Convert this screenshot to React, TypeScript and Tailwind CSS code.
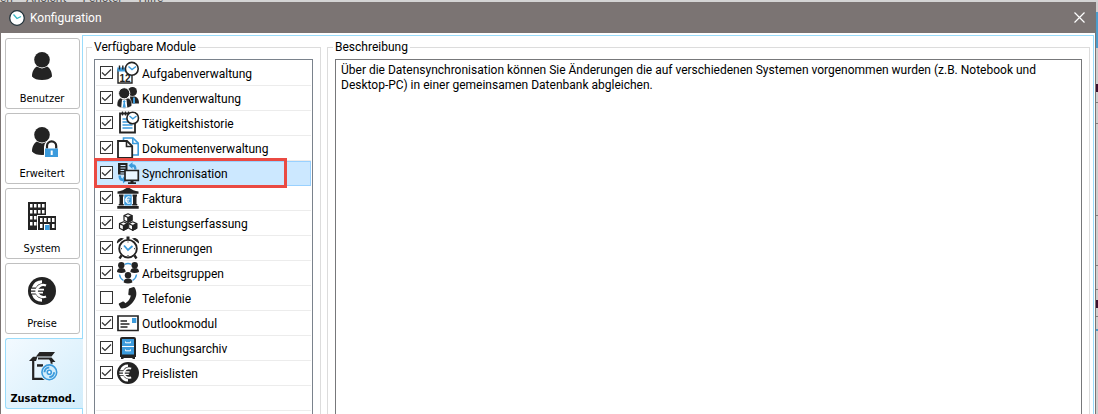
import { useState } from "react";
import type { ReactNode } from "react";

const DARK = "#232323";
const BLUE = "#3c9bdc";

function Icon({ size, children }: { size: 22 | 28; children: ReactNode }) {
  return (
    <svg width={size} height={size} viewBox={`0 0 ${size} ${size}`} fill={DARK} className="shrink-0 overflow-visible" aria-hidden="true">
      {children}
    </svg>
  );
}

// drawn on a 28 unit grid, reused for the sidebar and the price list module
function EuroCoin() {
  return (
    <>
      <circle cx="14" cy="14" r="14" />
      <path d="M14 3.200A10.800 10.800 0 0 0 3.800 10.500H8A7.800 7.800 0 0 1 14 6.200zM3.800 17.500A10.800 10.800 0 0 0 14 24.800v-3A7.800 7.800 0 0 1 8 17.500z" fill="#fff" />
      <path d="M18 8.500A6.800 6.800 0 0 0 8.500 14a6.800 6.800 0 0 0 9.500 5.500" fill="none" stroke="#fff" strokeWidth="2.400" />
      <path d="M3 12.600h13M3 15.600h12" stroke="#fff" strokeWidth="1.600" />
    </>
  );
}

function Person() {
  return (
    <>
      <circle cx="14" cy="7.700" r="7.800" />
      <path d="M4 24.500C4 19 6.500 16 9 14.600Q14 18.200 19 14.600C21.500 16 24 19 24 24.500Q21 28 14 28T4 24.500z" />
    </>
  );
}

const tabs = [
  { id: "user", label: "Benutzer", icon: <Person /> },
  {
    id: "advanced",
    label: "Erweitert",
    icon: (
      <>
        <Person />
        <path d="M16 30V20Q17 12.500 23.500 12.500T31 20V30z" fill="#fff" />
        <path d="M19 21.500v-2.500a4.600 4.600 0 0 1 9.200 0v2.500" fill="none" stroke={DARK} strokeWidth="2.200" />
        <path d="M17 21.500h13V30H17z" fill={BLUE} />
        <path d="M22.700 23.500h2v4.500h-2z" fill="#fff" />
      </>
    ),
  },
  {
    id: "system",
    label: "System",
    icon: (
      <>
        <path d="M0 0h18v28H0z" />
        <path
          d="M2 2h2.500v3.500H2zM6 2h2.500v3.500H6zM10 2h2.500v3.500H10zM14 2h2.500v3.500H14zM2 8h2.500v3.500H2zM6 8h2.500v3.500H6zM10 8h2.500v3.500H10zM14 8h2.500v3.500H14zM2 14h2.500v3.500H2zM6 14h2.500v3.500H6zM2 20h2.500v3.500H2zM6 20h2.500v3.500H6z"
          fill="#fff"
        />
        <path d="M9 13h19.500v15H9z" fill="#fff" />
        <path d="M10 14h18v14H10z" />
        <path
          d="M12 16h2.500v4H12zM16 16h2.500v4H16zM20 16h2.500v4H20zM24 16h2.500v4H24zM12 22h2.500v4H12zM24 22h2.500v4H24z"
          fill="#fff"
        />
        <path d="M16 22h5.500v6H16z" fill="#fff" />
        <path d="M17 23h4.500v5H17z" fill={BLUE} />
      </>
    ),
  },
  { id: "prices", label: "Preise", icon: <EuroCoin /> },
  {
    id: "modules",
    label: "Zusatzmod.",
    icon: (
      <>
        <path d="M10.500 0H26l-3.500 4.500H7zM4 4.800h4.500L7 9H0zM9 5.500h13.500l4 4.500H22l-2-2.500H9z" />
        <path d="M4.200 8v18.800H17" fill="none" stroke={DARK} strokeWidth="2.200" />
        <path d="M22.500 8v6" stroke={DARK} strokeWidth="2" />
        <path d="M8 12.200h6v2.500H8z" />
        <circle cx="20.300" cy="20.300" r="9" fill="#e6f5fd" />
        <circle cx="20.300" cy="20.300" r="7.400" fill="#d3edfb" stroke={BLUE} strokeWidth="1.600" />
        <circle cx="20.300" cy="20.300" r="2" fill="#fff" stroke={BLUE} strokeWidth="1.600" />
        <path d="M15.500 20.300a4.800 4.800 0 0 1 4.800-4.800M25.100 20.300a4.800 4.800 0 0 1-4.800 4.800" fill="none" stroke={BLUE} strokeWidth="2" />
      </>
    ),
  },
];

const modules = [
  {
    name: "Aufgabenverwaltung",
    icon: (
      <>
        <path d="M1 8h14v13H1z" fill="#fff" stroke={DARK} strokeWidth="1.400" />
        <path d="M.300 5.500h8v4h-8z" fill={BLUE} />
        <path d="M2.500 3.500v4M5.800 3.500v4" stroke={DARK} strokeWidth="1.400" />
        <text x="2.500" y="19.500" fontSize="10" fontWeight="700" fontFamily="Liberation Sans, sans-serif">12</text>
        <circle cx="14.800" cy="6.800" r="6.400" fill="#fff" stroke={DARK} strokeWidth="1.600" />
        <path d="M11.500 4.500l3.500 3 4-3" fill="none" stroke={BLUE} strokeWidth="1.400" />
      </>
    ),
  },
  {
    name: "Kundenverwaltung",
    icon: (
      <>
        <circle cx="15.500" cy="4.500" r="4.500" />
        <path d="M13 9.500h5c3 1 4 3.500 4 7h-8z" />
        <path d="M17 10.500v6" stroke={BLUE} strokeWidth="2" />
        <circle cx="7.200" cy="6.300" r="5.600" stroke="#fff" />
        <path d="M0 18.500c0-4 1-6.500 3.500-7.500Q7.200 13.500 11 11c3 1 3.800 3.500 3.800 7.500-3 3.500-11.800 3.500-14.800 0z" stroke="#fff" strokeWidth=".500" />
        <path d="M5 12.500h4.500l.800 8.300H4.200z" fill="#fff" />
        <path d="M7.200 13l1.500 1.500-.800 1 .900 5H5.700l.900-5-.800-1z" fill={BLUE} />
      </>
    ),
  },
  {
    name: "Tätigkeitshistorie",
    icon: (
      <>
        <path d="M3 1.500h15v19H3z" fill="#fff" stroke={DARK} strokeWidth="1.800" />
        <path d="M5.500-.500v4M8.500-.500v4M11.500-.500v4" stroke={DARK} strokeWidth="1.300" />
        <path d="M5.500 7h7M5.500 10h10M5.500 13h10M5.500 16h10" stroke={BLUE} strokeWidth="1.400" />
        <circle cx="15.700" cy="6" r="5.800" fill="#fff" stroke={DARK} strokeWidth="1.600" />
        <path d="M12.500 4l3.300 2.800L19.500 4" fill="none" stroke={BLUE} strokeWidth="1.400" />
      </>
    ),
  },
  {
    name: "Dokumentenverwaltung",
    icon: (
      <>
        <path d="M6.500 1h9.500l5.200 5.200V18H6.500z" fill="#fff" stroke={BLUE} strokeWidth="1.600" />
        <path d="M15.800 1v5.500h5.500" fill="none" stroke={BLUE} strokeWidth="1.600" />
        <path d="M1 4h9l5.200 5.200V21H1z" fill="#fff" stroke={DARK} strokeWidth="1.800" />
        <path d="M9.500 4v5.500H15" fill="none" stroke={DARK} strokeWidth="1.600" />
      </>
    ),
  },
  {
    name: "Synchronisation",
    icon: (
      <>
        <path d="M1 1h9.500v11.500H1z" />
        <path d="M3.500 3.500h5M3.500 6h5M3.500 8.500h5M3.500 11h5" stroke="#cce8ff" />
        <path d="M11.500 3.500L15.500 0v2.200c3 0 4 1.800 4 5.300h-2.300c0-2-.700-2.500-1.700-2.500v2z" fill={BLUE} />
        <path d="M1.500 13.500c0 4 1.500 5.700 4.500 5.700v2.300l4-3.500-4-3.500v2c-1.500 0-2-.800-2-3z" fill={BLUE} />
        <path d="M8 8.500h13.300v9.800H8z" fill="#eaf6ff" stroke={DARK} strokeWidth="1.700" />
        <path d="M13.500 18.500h3v1.800h2.500V22h-8v-1.700h2.500z" />
      </>
    ),
  },
  {
    name: "Faktura",
    icon: (
      <>
        <path d="M.500 4.500Q5.500 4 11 0q5.500 4 10.500 4.500v2.300H.500zM2 7.500h4.500v2H6v7.500h.800v1.500H1.700V17h.800V9.500H2zM15.500 7.500H20v2h-.500V17h.800v1.500h-5.100V17h.800V9.500h-.500zM.300 19h21.400v2.700H.300z" />
        <path d="M7.300 7.500h7.400v11H7.300z" fill={BLUE} />
        <path d="M13.500 10.300c-3-1.500-4.500.500-4.500 2.700s1.500 4.200 4.500 2.700M8 12.200h4.500M8 14h4" fill="none" stroke="#fff" strokeWidth="1.100" />
      </>
    ),
  },
  {
    name: "Leistungserfassung",
    icon: (
      <>
        <g id="cube" stroke={DARK} strokeWidth="1.200" strokeLinejoin="round">
          <path d="M11 1.800l4 1.800v4.600L11 10.300 7 8.200V3.600z" fill="#fff" />
          <path d="M11 5.500l4-1.900v4.600l-4 2.100z" />
          <path d="M7 3.600l4 1.900v4.800" fill="none" />
        </g>
        <use href="#cube" x="-4.500" y="8" />
        <use href="#cube" x="4.700" y="8" />
      </>
    ),
  },
  {
    name: "Erinnerungen",
    icon: (
      <>
        <path d="M0 6.500C-.500 2.500 3.500-.200 7 1.500zM22 6.500C22.500 2.500 18.500-.200 15 1.500zM9.500-.500h3v3h-3z" />
        <path d="M4.500 18.500l-2 3M17.500 18.500l2 3" stroke={DARK} strokeWidth="2.400" />
        <circle cx="11" cy="11.700" r="8.800" fill="#fff" stroke={DARK} strokeWidth="1.900" />
        <path d="M7 8.500l4 4.500 4.500-4" fill="none" stroke={BLUE} strokeWidth="1.800" />
        <path d="M11 4.500v1M11 18v1M4 11.700h1M17 11.700h1" stroke={DARK} />
      </>
    ),
  },
  {
    name: "Arbeitsgruppen",
    icon: (
      <>
        <path d="M7.500 2.500Q11 .500 14.500 2.500M2.500 12.500q.500 4 4 6M19.500 12.500q-.500 4-4 6" fill="none" stroke={BLUE} strokeWidth="1.400" />
        <circle cx="4.300" cy="3.200" r="3.200" />
        <path d="M0 10c0-2.600 1.200-4 4.300-4s4.300 1.400 4.300 4q-4.300 2-8.600 0z" />
        <circle cx="17.700" cy="3.200" r="3.200" />
        <path d="M13.400 10c0-2.600 1.200-4 4.300-4s4.300 1.400 4.300 4q-4.300 2-8.600 0z" />
        <circle cx="11" cy="13.300" r="3.200" />
        <path d="M6.700 20.500c0-2.600 1.200-4 4.300-4s4.300 1.400 4.300 4q-4.300 2-8.600 0z" />
      </>
    ),
  },
  {
    name: "Telefonie",
    icon: (
      <path d="M12.800 1.200L16.500 0q1 0 1.300.800C20 5 20 9.500 17 13.500 14 18 9.500 21.500 5 21.500q-1 0-1.500-.800L1.800 17.500q-.300-.800.500-1.300l3.500-1.700q.900-.300 1.500.400l1 1.300c3-1.500 5-4.500 5.500-7.700l-1.600-.300q-.900-.200-.900-1l.500-5q.200-.800 1-1z" />
    ),
  },
  {
    name: "Outlookmodul",
    icon: (
      <>
        <path d="M1 4h20v14.500H1z" fill="#fff" stroke={DARK} strokeWidth="1.700" />
        <path d="M3.500 9h6.500M3.500 12h9M3.500 15h7" stroke={DARK} strokeWidth="1.500" />
        <path d="M15 6h4.300v5H15z" fill={BLUE} />
      </>
    ),
  },
  {
    name: "Buchungsarchiv",
    icon: (
      <>
        <path d="M5 0h12q2 0 2 2v18h-1v2h-2.500v-1h-9v1H4v-2H3V2q0-2 2-2z" />
        <path d="M5 2h12v7H5zM5 10h12v7.500H5z" fill={BLUE} />
        <path d="M8.500 4.500v1.300h5V4.500M8.500 12.500v1.300h5v-1.300M5 9.500h12" fill="none" stroke="#fff" />
      </>
    ),
  },
  {
    name: "Preislisten",
    icon: (
      <g transform="scale(.7857)">
        <EuroCoin />
      </g>
    ),
  },
];

const DESCRIPTION =
  "Über die Datensynchronisation können Sie Änderungen die auf verschiedenen Systemen vorgenommen wurden (z.B. Notebook und Desktop-PC) in einer gemeinsamen Datenbank abgleichen.";

export default function App() {
  const [tab, setTab] = useState("modules");
  const [selected, setSelected] = useState("Synchronisation");
  const [enabled, setEnabled] = useState<string[]>(modules.map((m) => m.name).filter((n) => n !== "Telefonie"));

  const toggle = (name: string) =>
    setEnabled((prev) => (prev.includes(name) ? prev.filter((n) => n !== name) : [...prev, name]));

  return (
    <div className="flex h-screen flex-col overflow-hidden bg-[#d4d4d4] font-['Roboto','Open_Sans',sans-serif] text-[12px] text-black">
      {/* menu bar of the window behind the dialog */}
      <div className="flex h-0.5 shrink-0 items-end gap-4 overflow-hidden leading-[8px] text-[#555]">
        <span className="w-2.5">en</span>
        <span>Ansicht</span>
        <span>Fenster</span>
        <span>Hilfe</span>
      </div>

      <div className="flex min-h-0 flex-1">
        <div className="flex min-w-0 flex-1 flex-col border-x border-[#7b7473] bg-white">
          <header className="flex h-[31px] shrink-0 items-center bg-[#7b7473] pl-2 text-white">
            <svg width="16" height="16" viewBox="0 0 16 16" aria-hidden="true">
              <circle cx="8" cy="8" r="7.300" fill="#fff" stroke="#22333b" strokeWidth="1.300" />
              <path d="M4.500 4.500L8 8.500l4-2" fill="none" stroke="#35b5c0" strokeWidth="1.300" />
            </svg>
            <h1 className="ml-[5px] flex-1">Konfiguration</h1>
            <button type="button" aria-label="Schließen" className="mr-2 p-0.5">
              <svg width="11" height="11" viewBox="0 0 11 11" stroke="#fff" strokeWidth="1.200">
                <path d="M.500.500l10 10M10.500.500l-10 10" />
              </svg>
            </button>
          </header>

          <div className="flex min-h-0 flex-1 pt-0.5 pr-px">
            <nav className="flex w-[81px] shrink-0 flex-col gap-1 pt-[3px] pl-1 font-['DejaVu_Sans_Condensed','DejaVu_Sans',sans-serif] text-[11px]">
              {tabs.map((t) => (
                <button
                  key={t.id}
                  type="button"
                  onClick={() => setTab(t.id)}
                  className={
                    t.id === tab
                      ? "relative z-10 flex h-[71px] w-[78px] shrink-0 flex-col items-center rounded-l-[3px] border border-r-0 border-[#9adcfb] bg-linear-to-br from-[#f3faff] to-[#d2edfb] pt-[13px] pr-[3px] font-bold"
                      : "flex h-[71px] w-[75px] shrink-0 flex-col items-center rounded-[3px] border border-[#c0c0c0] bg-white pt-[13px] pr-px"
                  }
                >
                  <Icon size={28}>{t.icon}</Icon>
                  <span className="mt-[11px] leading-4">{t.label}</span>
                </button>
              ))}
            </nav>

            <main className="flex min-w-0 flex-1 gap-1.5 border border-b-0 border-[#9adcfb] px-[3px] pt-[3px]">
              <fieldset className="flex w-[235px] shrink-0 flex-col border border-b-0 border-[#dcdcdc] px-[7px] pt-1">
                <legend className="-ml-0.5 px-0.5 leading-4">Verfügbare Module</legend>
                <ul className="h-full border border-b-0 border-[#7a828c] p-px">
                  {modules.map((m) => (
                    <li
                      key={m.name}
                      onClick={() => setSelected(m.name)}
                      className={
                        m.name === selected
                          ? "relative flex h-[25px] items-center border-b border-[#99d1ff] bg-[#cce8ff] pl-1 shadow-[inset_0_1px_#99d1ff,inset_-1px_0_#99d1ff]"
                          : "flex h-[25px] items-center border-b border-[#ececec] pl-1"
                      }
                    >
                      <label className="flex items-center">
                        <span className="mb-px grid size-[13px] place-items-center">
                          <input
                            type="checkbox"
                            checked={enabled.includes(m.name)}
                            onChange={() => toggle(m.name)}
                            className="peer col-start-1 row-start-1 size-[13px] appearance-none border border-[#333] bg-white"
                          />
                          <svg
                            width="11"
                            height="11"
                            viewBox="0 0 11 11"
                            className="pointer-events-none invisible col-start-1 row-start-1 peer-checked:visible"
                          >
                            <path d="M1 5.500L4 8.500l6-6" fill="none" stroke="#333" strokeWidth="1.200" />
                          </svg>
                        </span>
                        <span className="mr-[3px] ml-1">
                          <Icon size={22}>{m.icon}</Icon>
                        </span>
                        <span className="pt-0.5">{m.name}</span>
                      </label>
                      {m.name === "Synchronisation" && (
                        <span className="pointer-events-none absolute -top-[3px] right-6 -bottom-[3px] -left-0.5 border-3 border-[#ea4a42]" />
                      )}
                    </li>
                  ))}
                  <li className="h-[25px] border-b border-[#ececec]" />
                </ul>
              </fieldset>

              <fieldset className="flex min-w-0 flex-1 flex-col border border-b-0 border-[#dcdcdc] px-[7px] pt-1">
                <legend className="-ml-0.5 px-0.5 leading-4">Beschreibung</legend>
                <textarea
                  readOnly
                  aria-label="Beschreibung"
                  value={selected === "Synchronisation" ? DESCRIPTION : ""}
                  className="block h-full w-full resize-none border border-b-0 border-[#77787a] px-[5px] pt-[3px] leading-[15px] outline-none"
                />
              </fieldset>
            </main>
          </div>
        </div>

        {/* sliver of the main window at the right edge */}
        <div className="flex w-0.5 shrink-0 flex-col bg-[#cfcfcf]">
          <div className="mt-2.5 h-9 bg-[#4d9ccb]" />
          <div className="mt-9 h-2 bg-[#3d1030]" />
          <div className="mt-2.5 h-px bg-[#808080]" />
          <div className="mt-5 h-px bg-[#808080]" />
          <div className="mt-[91px] h-px bg-[#808080]" />
          <div className="mt-[49px] h-px bg-[#808080]" />
          <div className="mt-[23px] h-px bg-[#808080]" />
          <div className="mt-[10px] h-2 bg-[#3d1030]" />
          <div className="mt-[8px] h-px bg-[#808080]" />
          <div className="mt-3 h-0.5 bg-[#4d9ccb]" />
        </div>
      </div>
    </div>
  );
}
